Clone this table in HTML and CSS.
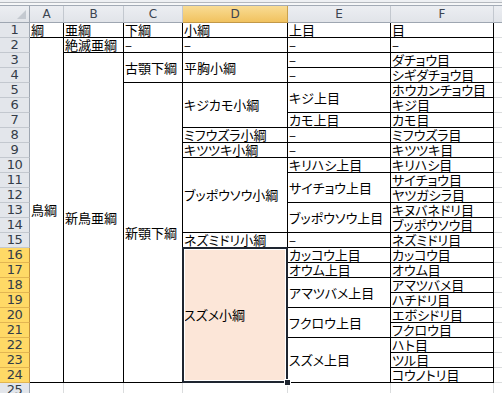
FILE: index.html
```html
<!DOCTYPE html>
<html lang="ja">
<head>
<meta charset="utf-8">
<title>鳥綱 分類表</title>
<link rel="stylesheet" href="styles.css">
</head>
<body>
<div class="top"></div>
<div class="sheet">
  <div class="hd corner"><span class="tri"></span></div>
  <div class="hd">A</div>
  <div class="hd">B</div>
  <div class="hd">C</div>
  <div class="hd hsel">D</div>
  <div class="hd">E</div>
  <div class="hd">F</div>
  <div class="hd hg"></div>

  <div class="rh">1</div>
  <div class="c">綱</div><div class="c">亜綱</div><div class="c">下綱</div><div class="c">小綱</div><div class="c">上目</div><div class="c">目</div><div class="g"></div>

  <div class="rh">2</div>
  <div class="c m s23">鳥綱</div><div class="c">絶滅亜綱</div><div class="c">–</div><div class="c">–</div><div class="c">–</div><div class="c">–</div><div class="g"></div>

  <div class="rh">3</div>
  <div class="c m s22">新鳥亜綱</div><div class="c m s2">古顎下綱</div><div class="c m s2">平胸小綱</div><div class="c">–</div><div class="c">ダチョウ目</div><div class="g"></div>

  <div class="rh">4</div>
  <div class="c">–</div><div class="c">シギダチョウ目</div><div class="g"></div>

  <div class="rh">5</div>
  <div class="c m s20">新顎下綱</div><div class="c m s3">キジカモ小綱</div><div class="c m s2">キジ上目</div><div class="c">ホウカンチョウ目</div><div class="g"></div>

  <div class="rh">6</div>
  <div class="c">キジ目</div><div class="g"></div>

  <div class="rh">7</div>
  <div class="c">カモ上目</div><div class="c">カモ目</div><div class="g"></div>

  <div class="rh">8</div>
  <div class="c">ミフウズラ小綱</div><div class="c">–</div><div class="c">ミフウズラ目</div><div class="g"></div>

  <div class="rh">9</div>
  <div class="c">キツツキ小綱</div><div class="c">–</div><div class="c">キツツキ目</div><div class="g"></div>

  <div class="rh">10</div>
  <div class="c m s5">ブッポウソウ小綱</div><div class="c">キリハシ上目</div><div class="c">キリハシ目</div><div class="g"></div>

  <div class="rh">11</div>
  <div class="c m s2">サイチョウ上目</div><div class="c">サイチョウ目</div><div class="g"></div>

  <div class="rh">12</div>
  <div class="c">ヤツガシラ目</div><div class="g"></div>

  <div class="rh">13</div>
  <div class="c m s2">ブッポウソウ上目</div><div class="c">キヌバネドリ目</div><div class="g"></div>

  <div class="rh">14</div>
  <div class="c">ブッポウソウ目</div><div class="g"></div>

  <div class="rh">15</div>
  <div class="c">ネズミドリ小綱</div><div class="c">–</div><div class="c">ネズミドリ目</div><div class="g"></div>

  <div class="rh rsel">16</div>
  <div class="c m s9 sel">スズメ小綱<span class="handle"></span></div><div class="c">カッコウ上目</div><div class="c">カッコウ目</div><div class="g"></div>

  <div class="rh rsel">17</div>
  <div class="c">オウム上目</div><div class="c">オウム目</div><div class="g"></div>

  <div class="rh rsel">18</div>
  <div class="c m s2">アマツバメ上目</div><div class="c">アマツバメ目</div><div class="g"></div>

  <div class="rh rsel">19</div>
  <div class="c">ハチドリ目</div><div class="g"></div>

  <div class="rh rsel">20</div>
  <div class="c m s2">フクロウ上目</div><div class="c">エボシドリ目</div><div class="g"></div>

  <div class="rh rsel">21</div>
  <div class="c">フクロウ目</div><div class="g"></div>

  <div class="rh rsel">22</div>
  <div class="c m s3">スズメ上目</div><div class="c">ハト目</div><div class="g"></div>

  <div class="rh rsel">23</div>
  <div class="c">ツル目</div><div class="g"></div>

  <div class="rh rsel">24</div>
  <div class="c">コウノトリ目</div><div class="g"></div>

  <div class="rh">25</div>
  <div class="e"></div><div class="e"></div><div class="e"></div><div class="e"></div><div class="e"></div><div class="e"></div><div class="g"></div>
</div>
</body>
</html>
```
FILE: styles.css
```css
html, body {
  margin: 0;
  padding: 0;
  overflow: hidden;
  background: #ffffff;
}
body {
  font-family: "Noto Sans CJK JP", "Noto Sans", sans-serif;
  color: #000;
}
.top {
  height: 6px;
  background: linear-gradient(#eef0f3 0 2px, #b4b8be 2px 3px, #f6f7f8 3px 5px, #a3abb6 5px 6px);
}
.sheet {
  display: grid;
  grid-template-columns: 30px 34px 60px 59px 105px 103px 103px 1fr;
  grid-template-rows: 17px;
  grid-auto-rows: 15px;
}
.hd {
  box-sizing: border-box;
  background: linear-gradient(#eceef2, #e1e4e9);
  border-right: 1px solid #c3c8cf;
  border-bottom: 1px solid #9ea6b1;
  font-size: 12px;
  line-height: 16px;
  color: #3c4450;
  text-align: center;
  font-family: "DejaVu Sans", sans-serif;
}
.corner {
  position: relative;
  border-right-color: #9ea6b1;
}
.tri {
  position: absolute;
  right: 3px;
  bottom: 3px;
  width: 0;
  height: 0;
  border-left: 9px solid transparent;
  border-bottom: 9px solid #c4c9d0;
}
.hsel {
  background: linear-gradient(#f9dc94, #f1c25f);
  border-right-color: #c9a24e;
  border-bottom-color: #c29848;
  color: #3c4450;
}
.hg {
  border-right: none;
}
.rh {
  box-sizing: border-box;
  background: #e3e6eb;
  border-right: 1px solid #9ea6b1;
  border-bottom: 1px solid #c3c8cf;
  font-size: 13px;
  line-height: 14px;
  color: #333c48;
  text-align: center;
  font-family: "DejaVu Sans", sans-serif;
  letter-spacing: -0.5px;
}
.rsel {
  background: #ffd966;
  border-right-color: #c2903a;
  border-bottom-color: #e2b552;
}
.c {
  box-sizing: border-box;
  border-right: 1px solid #000;
  border-bottom: 1px solid #000;
  font-size: 13px;
  line-height: 14px;
  padding-left: 1px;
  display: flex;
  align-items: flex-end;
  white-space: nowrap;
  font-feature-settings: "palt";
}
.m {
  align-items: center;
}
.s2 { grid-row: span 2; }
.s3 { grid-row: span 3; }
.s5 { grid-row: span 5; }
.s9 { grid-row: span 9; }
.s20 { grid-row: span 20; }
.s22 { grid-row: span 22; }
.s23 { grid-row: span 23; }
.g {
  border-bottom: 1px solid #dadcdd;
}
.e {
  box-sizing: border-box;
  border-right: 1px solid #dadcdd;
  border-bottom: 1px solid #dadcdd;
}
.sel {
  position: relative;
  background: #fce6d8;
}
.sel::after {
  content: "";
  position: absolute;
  left: -1px;
  top: -1px;
  right: -1px;
  bottom: -1px;
  border: 2px solid #1e2530;
  box-shadow: inset 0 0 0 1px #ffffff;
  pointer-events: none;
}
.handle {
  position: absolute;
  right: -4px;
  bottom: -4px;
  width: 5px;
  height: 5px;
  background: #1e2530;
  border: 1px solid #ffffff;
  z-index: 2;
}
```
